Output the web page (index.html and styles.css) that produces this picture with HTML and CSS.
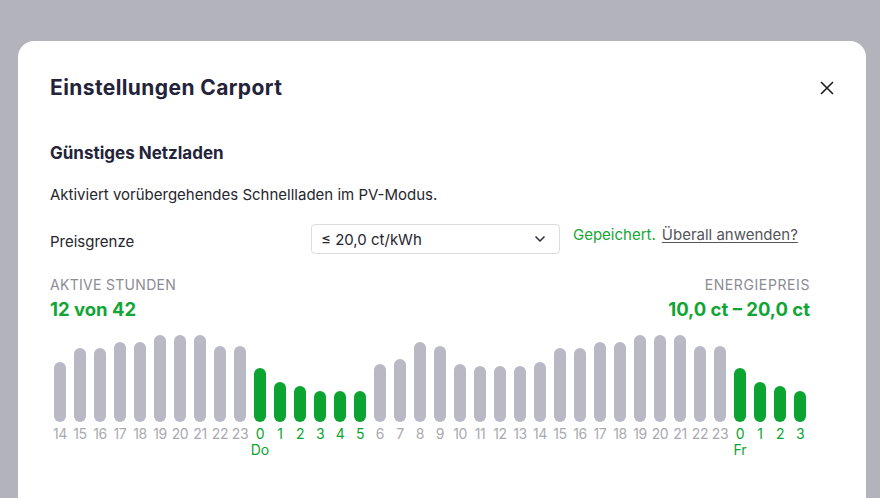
FILE: index.html
```html
<!DOCTYPE html>
<html lang="de">
<head>
<meta charset="utf-8">
<link rel="stylesheet" href="styles.css">
</head>
<body>
<div class="modal">
  <div class="header">
    <h1 class="title">Einstellungen Carport</h1>
    <button class="close" aria-label="Schließen">
      <svg width="14" height="14" viewBox="0 0 14 14"><path d="M1 1L13 13M13 1L1 13" stroke="#1d1d24" stroke-width="1.6" fill="none"/></svg>
    </button>
  </div>
  <div class="content">
    <h2 class="section">Günstiges Netzladen</h2>
    <p class="desc">Aktiviert vorübergehendes Schnellladen im PV-Modus.</p>
    <div class="row">
      <span class="label">Preisgrenze</span>
      <div class="select">
        <span>≤ 20,0 ct/kWh</span>
        <svg width="12" height="8" viewBox="0 0 12 8"><path d="M1.5 1.5L6 6L10.5 1.5" stroke="#2a2a33" stroke-width="1.5" fill="none"/></svg>
      </div>
      <span class="saved">Gepeichert.</span>
      <a class="apply" href="#">Überall anwenden?</a>
    </div>
    <div class="stats">
      <div class="stat">
        <div class="stat-label">AKTIVE STUNDEN</div>
        <div class="stat-value">12 von 42</div>
      </div>
      <div class="stat right">
        <div class="stat-label">ENERGIEPREIS</div>
        <div class="stat-value">10,0 ct – 20,0 ct</div>
      </div>
    </div>
    <div class="chart" id="chart"></div>
  </div>
</div>
<script src="app.js"></script>
</body>
</html>
```
FILE: app.js
```js
const data = [
  [14,60,0],[15,74,0],[16,74,0],[17,80,0],[18,80,0],[19,87,0],[20,87,0],[21,87,0],[22,76,0],[23,76,0],
  [0,54,1,'Do'],[1,40,1],[2,36,1],[3,31,1],[4,31,1],[5,31,1],[6,58,0],[7,63,0],[8,80,0],[9,76,0],
  [10,58,0],[11,56,0],[12,56,0],[13,56,0],[14,60,0],[15,74,0],[16,74,0],[17,80,0],[18,80,0],[19,87,0],
  [20,87,0],[21,87,0],[22,76,0],[23,76,0],[0,54,1,'Fr'],[1,40,1],[2,36,1],[3,31,1]
];
const chart = document.getElementById('chart');
data.forEach(([h, v, on, day]) => {
  const col = document.createElement('div');
  col.className = 'col' + (on ? ' on' : '');
  col.innerHTML = '<div class="bar-area"><div class="bar" style="height:' + v + 'px"></div></div>' +
    '<div class="hour">' + h + '</div>' + (day ? '<div class="day">' + day + '</div>' : '');
  chart.appendChild(col);
});
```
FILE: styles.css
```css
* { box-sizing: border-box; }
html, body { margin: 0; padding: 0; }
body {
  background: #b3b3bb;
  font-family: Inter, "Noto Sans", sans-serif;
  color: #24243a;
  width: 880px;
  height: 498px;
  overflow: hidden;
}
.modal {
  margin: 41px 0 0 18px;
  width: 848px;
  height: 480px;
  background: #fff;
  border-radius: 16px;
  padding: 33px 32px 0 32px;
}
.header {
  display: flex;
  justify-content: space-between;
  align-items: center;
  height: 28px;
}
.title {
  margin: 0;
  font-size: 21px;
  font-weight: 700;
  line-height: 28px;
  letter-spacing: 0.4px;
  color: #23233a;
}
.close {
  border: 0;
  background: none;
  padding: 0;
  width: 14px;
  height: 14px;
  display: flex;
}
.content {
  padding-right: 24px;
}
.section {
  margin: 39px 0 0;
  font-size: 17px;
  font-weight: 700;
  line-height: 24px;
  color: #23233a;
}
.desc {
  margin: 19px 0 0;
  font-size: 15px;
  line-height: 22px;
  color: #26262e;
}
.row {
  display: flex;
  align-items: center;
  margin-top: 18px;
  font-size: 15px;
}
.label {
  width: 261px;
  color: #26262e;
  padding-top: 4px;
}
.select {
  width: 249px;
  height: 30px;
  border: 1px solid #dcdce0;
  border-radius: 4px;
  display: flex;
  align-items: center;
  justify-content: space-between;
  padding: 0 13px 0 9px;
  color: #26262e;
}
.saved {
  margin-left: 13px;
  color: #16a637;
  font-size: 15px;
  align-self: flex-start;
  padding-top: 1px;
}
.apply {
  margin-left: 6px;
  color: #55555c;
  font-size: 15px;
  align-self: flex-start;
  padding-top: 1px;
  text-decoration: underline;
  text-underline-offset: 2px;
}
.stats {
  display: flex;
  justify-content: space-between;
  margin-top: 22px;
}
.stat.right { text-align: right; }
.stat-label {
  font-size: 14px;
  line-height: 18px;
  letter-spacing: 0.3px;
  color: #8c8c94;
}
.stat.right .stat-label { letter-spacing: 0.6px; }
.stat-value {
  font-size: 18.5px;
  font-weight: 700;
  line-height: 30px;
  color: #10a534;
}
.chart {
  display: flex;
  margin-top: 11px;
}
.col {
  width: 20px;
  display: flex;
  flex-direction: column;
  align-items: center;
}
.bar-area {
  height: 87px;
  display: flex;
  align-items: flex-end;
}
.bar {
  width: 12px;
  border-radius: 6px;
  background: #b9b9c6;
}
.col.on .bar { background: #0ba431; }
.hour {
  margin-top: 5px;
  font-size: 14px;
  line-height: 14px;
  color: #a9a9b2;
  letter-spacing: -0.4px;
  white-space: nowrap;
}
.col.on .hour, .day { color: #0ba431; }
.day {
  margin-top: 2px;
  font-size: 14px;
  line-height: 14px;
}
```
